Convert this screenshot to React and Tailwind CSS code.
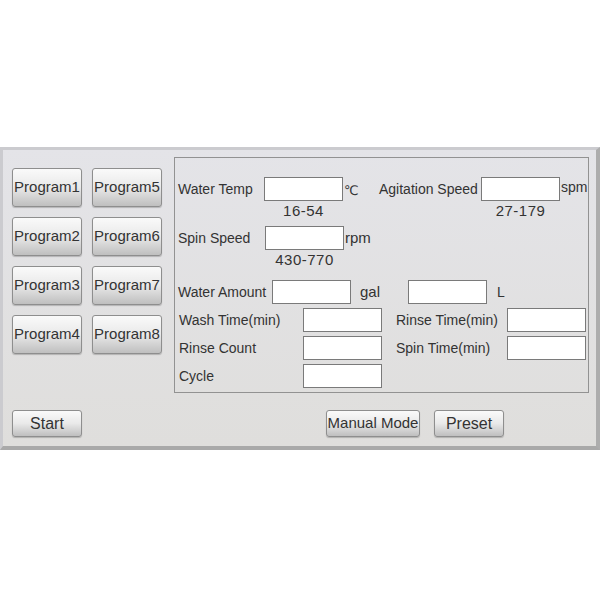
const btn =
    "flex items-center justify-center rounded-[3px] border border-[#8e8e8e] bg-linear-to-b from-[#fafafa] via-[#e9e9e9] to-[#bfbfbf] text-[#333] shadow-[0_1px_1px_rgba(0,0,0,0.2)]";

const inputBox = "w-[79px] h-[24px] bg-white border border-[#7a7a7a]";

const Field = ({ range }) => (
    <div className="w-[79px] flex flex-col">
        <div className={inputBox} />
        {range && (
            <div className="mt-[1px] text-center text-[15px] leading-[18px] tracking-[0.5px] text-[#333]">{range}</div>
        )}
    </div>
);

const Label = ({ w, children, className = "" }) => (
    <div className={`h-[24px] flex items-center text-[14px] text-[#333] whitespace-nowrap ${w} ${className}`}>
        {children}
    </div>
);

const programs = [
    ["Program1", "Program5"],
    ["Program2", "Program6"],
    ["Program3", "Program7"],
    ["Program4", "Program8"],
];

export default function App() {
    return (
        <div className="w-[600px] h-[600px] bg-white pt-[147px] font-['Liberation_Sans','DejaVu_Sans',sans-serif]">
            <div className="h-[303px] border-t-[3px] border-l-[3px] border-r-[4px] border-b-[4px] border-t-[#cbcbcf] border-l-[#cbcbcf] border-r-[#adadad] border-b-[#a9a9a9] bg-linear-to-b from-[#e4e4e8] to-[#dfdedc]">
                {/* top: programs + settings */}
                <div className="flex items-start pt-[7px] pl-[9px]">
                    <div className="mt-[11px] grid grid-cols-[70px_70px] gap-x-[10px] gap-y-[10px]">
                        {programs.map(([a, b]) => [
                            <button key={a} className={`${btn} h-[39px] text-[15px]`}>{a}</button>,
                            <button key={b} className={`${btn} h-[39px] text-[15px]`}>{b}</button>,
                        ])}
                    </div>

                    <div className="ml-[12px] w-[415px] h-[236px] border border-[#929292] pt-[19px]">
                        {/* water temp / agitation */}
                        <div className="flex items-start">
                            <Label w="w-[89px]" className="pl-[3px]">Water Temp</Label>
                            <Field range="16-54" />
                            <Label w="w-[36px]" className="pl-[1px] pt-[3px]">
                                <span className="font-['DejaVu_Sans',sans-serif] text-[13px]">℃</span>
                            </Label>
                            <Label w="w-[102px]">Agitation Speed</Label>
                            <Field range="27-179" />
                            <Label w="" className="pl-[1px] -mt-[2px]">spm</Label>
                        </div>

                        {/* spin speed */}
                        <div className="flex items-start mt-[6px]">
                            <Label w="w-[90px]" className="pl-[3px]">Spin Speed</Label>
                            <Field range="430-770" />
                            <Label w="" className="pl-[1px] text-[15px]">rpm</Label>
                        </div>

                        {/* water amount */}
                        <div className="flex items-start mt-[11px]">
                            <Label w="w-[97px]" className="pl-[3px]">Water Amount</Label>
                            <Field />
                            <Label w="w-[57px]" className="pl-[9px] text-[15px]">gal</Label>
                            <Field />
                            <Label w="" className="pl-[10px]">L</Label>
                        </div>

                        <div className="flex items-start mt-[4px]">
                            <Label w="w-[128px]" className="pl-[4px]">Wash Time(min)</Label>
                            <Field />
                            <Label w="w-[111px]" className="ml-[14px]">Rinse Time(min)</Label>
                            <Field />
                        </div>

                        <div className="flex items-start mt-[4px]">
                            <Label w="w-[128px]" className="pl-[4px]">Rinse Count</Label>
                            <Field />
                            <Label w="w-[111px]" className="ml-[14px]">Spin Time(min)</Label>
                            <Field />
                        </div>

                        <div className="flex items-start mt-[4px]">
                            <Label w="w-[128px]" className="pl-[4px]">Cycle</Label>
                            <Field />
                        </div>
                    </div>
                </div>

                {/* bottom buttons */}
                <div className="flex mt-[17px] pl-[9px]">
                    <button className={`${btn} w-[70px] h-[27px] text-[16px]`}>Start</button>
                    <button className={`${btn} ml-[244px] w-[94px] h-[27px] text-[15px]`}>Manual Mode</button>
                    <button className={`${btn} ml-[14px] w-[70px] h-[27px] text-[16px]`}>Preset</button>
                </div>
            </div>
        </div>
    );
}
